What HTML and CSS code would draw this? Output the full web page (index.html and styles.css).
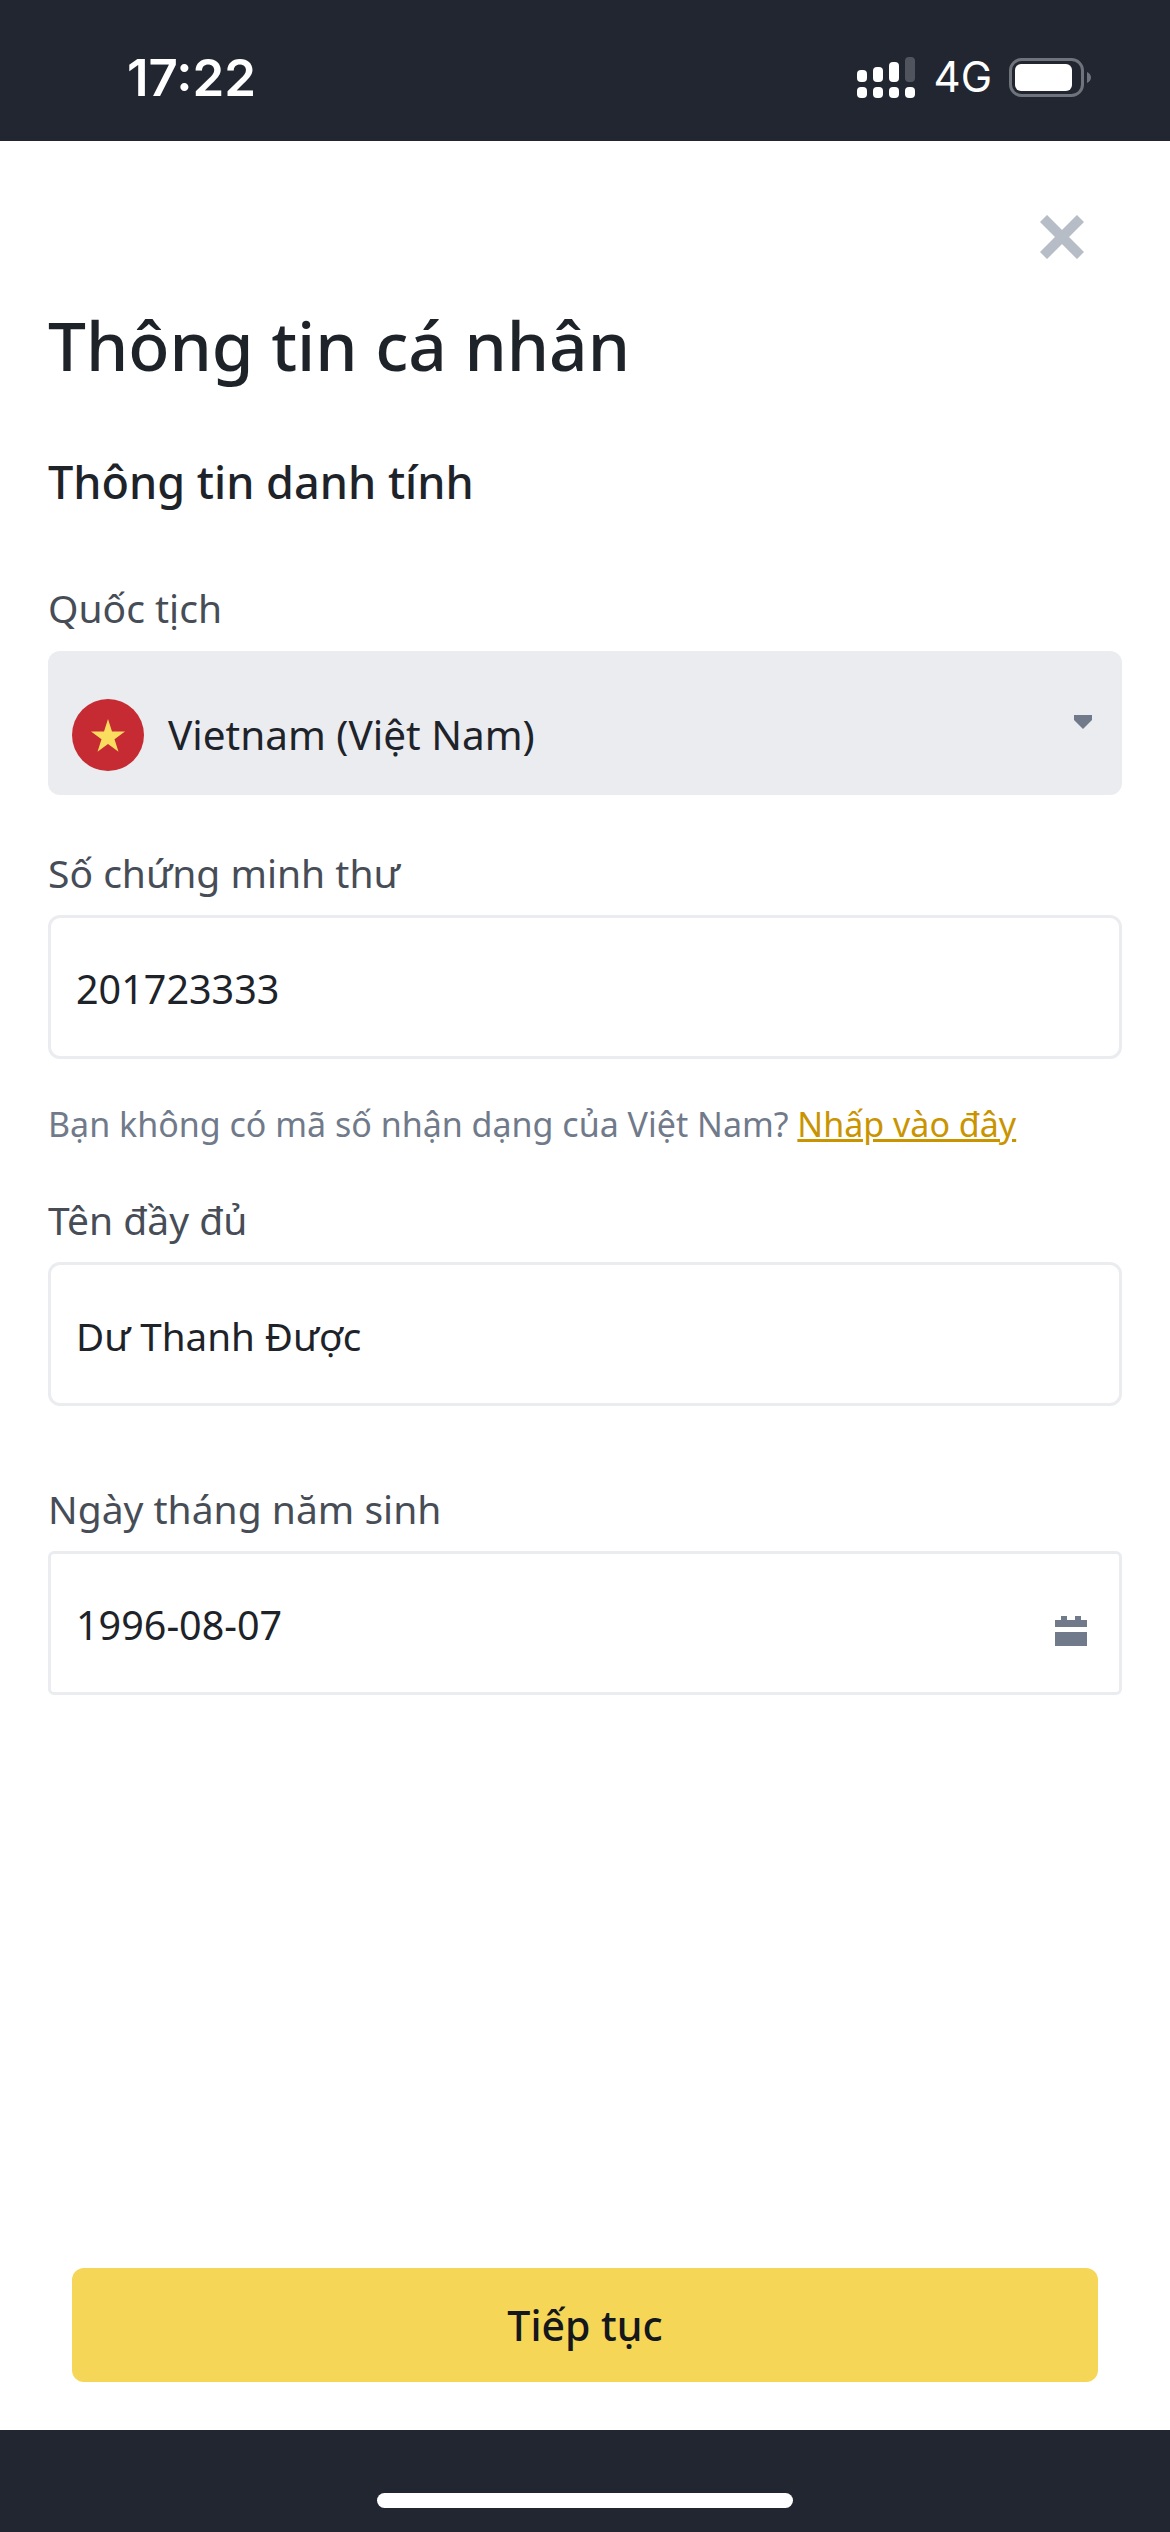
FILE: index.html
```html
<!DOCTYPE html>
<html lang="vi">
<head>
    <meta charset="UTF-8">
    <meta name="viewport" content="width=device-width, initial-scale=1.0">
    <title>Thông tin cá nhân</title>
    <link rel="stylesheet" href="styles.css">
</head>
<body>
    <header class="status-bar">
        <span class="status-time">17:22</span>
        <div class="status-icons">
            <svg class="signal" width="58" height="41" viewBox="0 0 58 41">
                <rect x="0" y="13" width="10" height="12" rx="4" fill="#fff"/>
                <rect x="16" y="10" width="10" height="15" rx="4" fill="#fff"/>
                <rect x="32" y="5" width="10" height="20" rx="4" fill="#fff"/>
                <rect x="48" y="0" width="10" height="25" rx="4" fill="#50555d"/>
                <rect x="0" y="30" width="10" height="11" rx="4" fill="#fff"/>
                <rect x="16" y="30" width="10" height="11" rx="4" fill="#fff"/>
                <rect x="32" y="30" width="10" height="11" rx="4" fill="#fff"/>
                <rect x="48" y="30" width="10" height="11" rx="4" fill="#fff"/>
            </svg>
            <span class="status-net">4G</span>
            <svg class="battery" width="82" height="39" viewBox="0 0 82 39">
                <rect x="1.5" y="1.5" width="72" height="36" rx="11" fill="none" stroke="#6f737b" stroke-width="3"/>
                <rect x="6" y="6" width="57" height="27" rx="6" fill="#fff"/>
                <path d="M78 14c2.5 1 4 3 4 5.500s-1.500 4.500-4 5.500z" fill="#6f737b"/>
            </svg>
        </div>
    </header>

    <main class="content">
        <div class="close-row">
            <svg class="close-icon" width="44" height="44" viewBox="0 0 44 44">
                <path d="M3.5 3.5L40.5 40.5M40.5 3.5L3.5 40.5" stroke="#b7bdc6" stroke-width="10" fill="none"/>
            </svg>
        </div>
        <h1 class="page-title">Thông tin cá nhân</h1>
        <h2 class="section-title">Thông tin danh tính</h2>

        <form class="form">
            <div class="field field-nation">
                <label class="field-label">Quốc tịch</label>
                <div class="select-box">
                    <svg class="flag" width="72" height="72" viewBox="0 0 72 72">
                        <circle cx="36" cy="36" r="36" fill="#c62a32"/>
                        <path d="M36 20l4 12.500h13l-10.500 7.700 4 12.500-10.500-7.700-10.500 7.700 4-12.500-10.500-7.700h13z" fill="#fadc5f"/>
                    </svg>
                    <span class="select-text">Vietnam (Việt Nam)</span>
                    <svg class="caret" width="18" height="14" viewBox="0 0 18 14">
                        <path d="M0 0h18v5l-9 9-9-9z" fill="#707a8a"/>
                    </svg>
                </div>
            </div>

            <div class="field field-id">
                <label class="field-label">Số chứng minh thư</label>
                <div class="input-box"><span class="input-text">201723333</span></div>
                <p class="hint">Bạn không có mã số nhận dạng của Việt Nam? <a href="#" class="hint-link">Nhấp vào đây</a></p>
            </div>

            <div class="field field-name">
                <label class="field-label">Tên đầy đủ</label>
                <div class="input-box"><span class="input-text input-name">Dư Thanh Được</span></div>
            </div>

            <div class="field field-birth">
                <label class="field-label">Ngày tháng năm sinh</label>
                <div class="input-box input-square">
                    <span class="input-text">1996-08-07</span>
                    <svg class="calendar" width="32" height="30" viewBox="0 0 32 30">
                        <path d="M6 0h6v4h8v-4h6v4h6v7h-32v-7h6zM0 16h32v14h-32z" fill="#707a8a"/>
                    </svg>
                </div>
            </div>
        </form>

        <div class="action">
            <button type="button" class="btn-primary">Tiếp tục</button>
        </div>
    </main>

    <footer class="home-bar">
        <div class="home-indicator"></div>
    </footer>
</body>
</html>
```

FILE: styles.css
```css
:root {
    --bar-color: #212630;
    --text-color: #1e2329;
    --label-color: #474d57;
    --hint-color: #707a8a;
    --line-color: #eaecef;
    --link-color: #c99400;
    --button-color: #f5d657;
}

* {
    box-sizing: border-box;
}

html, body {
    margin: 0;
    padding: 0;
}

body {
    width: 1170px;
    height: 2532px;
    display: flex;
    flex-direction: column;
    background: #fff;
    color: var(--text-color);
    font-family: "Noto Sans", "Liberation Sans", sans-serif;
}

.status-bar {
    flex: 0 0 141px;
    background: var(--bar-color);
    color: #fff;
    display: flex;
    justify-content: space-between;
    align-items: flex-start;
    padding: 0 79px 0 127px;
    font-family: Inter, "Liberation Sans", sans-serif;
}

.status-time {
    font-size: 51px;
    font-weight: 600;
    line-height: 58px;
    margin-top: 49px;
}

.status-icons {
    display: flex;
    align-items: flex-start;
    margin-top: 57px;
}

.signal {
    margin-right: 19px;
}

.status-net {
    font-size: 42px;
    line-height: 48px;
    margin-right: 17px;
    margin-top: -4px;
}

.battery {
    margin-top: 1px;
}

.content {
    flex: 1;
    display: flex;
    flex-direction: column;
    padding: 0 48px;
}

.close-row {
    display: flex;
    justify-content: flex-end;
    padding: 74px 38px 0 0;
}

.page-title {
    margin: 38px 0 0;
    font-size: 67.5px;
    font-weight: 500;
    line-height: 96px;
}

.section-title {
    margin: 59px 0 0;
    font-size: 45px;
    font-weight: 500;
    line-height: 60px;
}

.form {
    display: flex;
    flex-direction: column;
}

.field-label {
    display: block;
    font-size: 39px;
    line-height: 54px;
    color: var(--label-color);
}

.field-nation {
    margin-top: 69px;
}

.field-id {
    margin-top: 51px;
}

.field-name {
    margin-top: 45px;
}

.field-birth {
    margin-top: 76px;
}

.select-box {
    height: 144px;
    margin-top: 16px;
    background: var(--line-color);
    border-radius: 12px;
    display: flex;
    align-items: center;
    padding: 0 30px 0 24px;
}

.flag {
    margin: 24px 24px 0 0;
}

.select-text {
    flex: 1;
    margin-top: 22px;
    font-size: 40.5px;
}

.caret {
    margin-bottom: 2px;
}

.input-box {
    height: 144px;
    margin-top: 15px;
    border: 3px solid var(--line-color);
    border-radius: 12px;
    display: flex;
    align-items: center;
    justify-content: space-between;
    padding: 3px 32px 0 25px;
}

.input-square {
    border-radius: 6px;
}

.input-text {
    font-size: 39.5px;
}

.input-name {
    font-size: 38.6px;
}

.calendar {
    margin-top: 13px;
}

.hint {
    margin: 41px 0 0;
    font-size: 34px;
    line-height: 48px;
    color: var(--hint-color);
}

.hint-link {
    color: var(--link-color);
}

.action {
    margin-top: auto;
    padding: 0 24px 48px;
}

.btn-primary {
    display: block;
    width: 100%;
    height: 114px;
    border: none;
    border-radius: 12px;
    background: var(--button-color);
    color: #14171c;
    font-family: inherit;
    font-size: 41px;
    font-weight: 500;
}

.home-bar {
    flex: 0 0 102px;
    background: var(--bar-color);
    display: flex;
    justify-content: center;
    padding-top: 63px;
}

.home-indicator {
    width: 416px;
    height: 15px;
    border-radius: 8px;
    background: #fff;
}
```
